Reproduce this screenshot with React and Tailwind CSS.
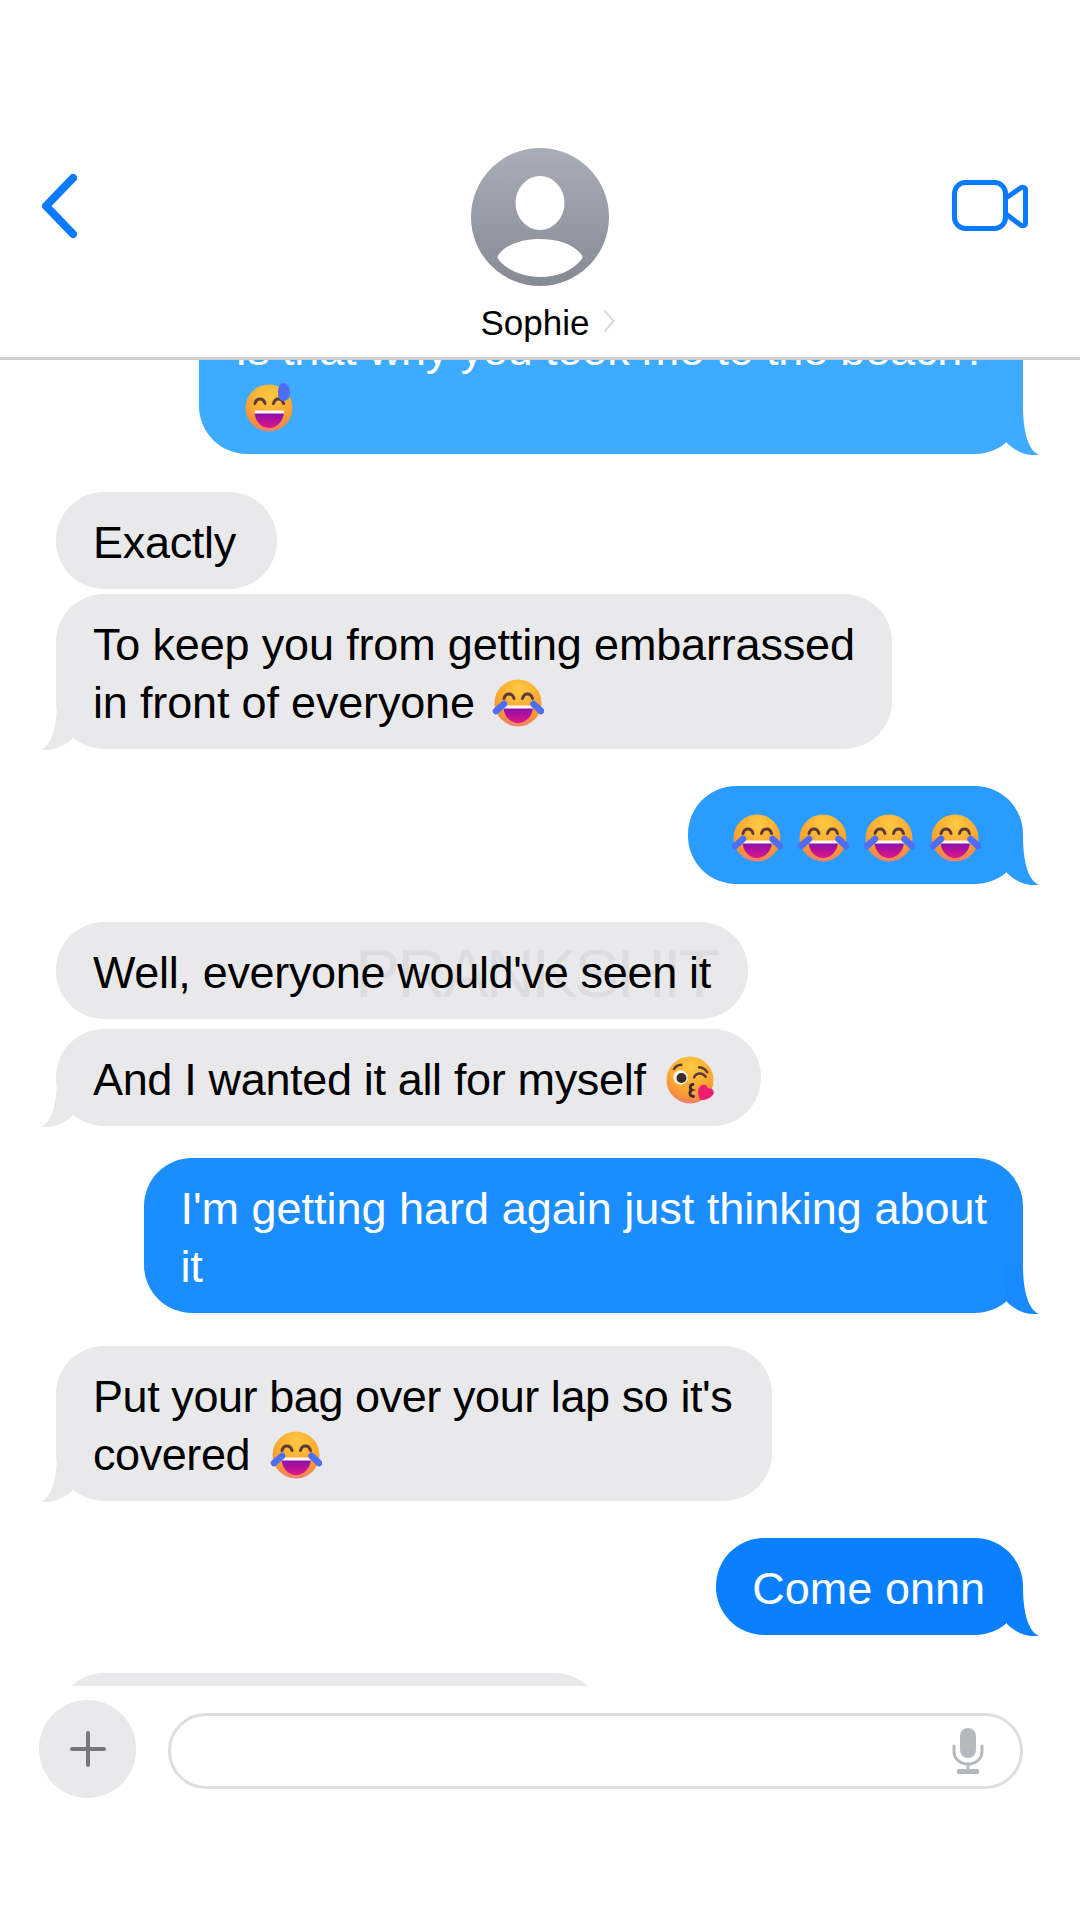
import { useId } from 'react'

const Face = ({ children }) => {
  const id = useId()
  return (
    <svg viewBox="0 0 52 52" className="inline-block h-[52px] w-[52px] align-[-11px]">
      <defs>
        <radialGradient id={id} cx="52%" cy="22%" r="82%">
          <stop offset="0%" stopColor="#fdca42" />
          <stop offset="60%" stopColor="#fba630" />
          <stop offset="84%" stopColor="#f68c42" />
          <stop offset="100%" stopColor="#ee7a90" />
        </radialGradient>
      </defs>
      <circle cx="26" cy="26" r="23.5" fill={`url(#${id})`} />
      {children}
    </svg>
  )
}

const Mouth = () => {
  const id = useId()
  return (
    <>
      <defs>
        <linearGradient id={id} x1="0" y1="0" x2="0" y2="1">
          <stop offset="0%" stopColor="#7d0fb0" />
          <stop offset="100%" stopColor="#e0168a" />
        </linearGradient>
      </defs>
      <path d="M11.5 29H41C41 39 34 46 26 46S11.5 39 11.5 29Z" fill={`url(#${id})`} />
      <rect x="11.500" y="28.500" width="29.500" height="3" fill="#fff6f6" />
    </>
  )
}

const HappyEyes = () => (
  <g fill="none" stroke="#5c3a38" strokeWidth="3" strokeLinecap="round">
    <path d="M12 21.5C13.500 15.500 20.500 15.500 22 21.5" />
    <path d="M30.500 21.500C32 15.500 39 15.500 40.500 21.500" />
  </g>
)

const JoyEmoji = () => (
  <Face>
    <HappyEyes />
    <Mouth />
    <g stroke="#4f6df5" strokeWidth="6.5" strokeLinecap="round">
      <line x1="4" y1="34" x2="12" y2="27" />
      <line x1="49" y1="34" x2="41.500" y2="27" />
    </g>
  </Face>
)

const SweatEmoji = () => (
  <Face>
    <HappyEyes />
    <Mouth />
    <path d="M40 1C45 1 47 6 47 11C47 16 44 19 40.5 19C37 19 35 16 35 11C35 6 36.5 1 40 1Z" fill="#4f6df5" />
  </Face>
)

const KissEmoji = () => (
  <Face>
    <g fill="none" stroke="#5c3a38" strokeWidth="2.4" strokeLinecap="round">
      <path d="M10 15C11.500 12.500 14.500 10.800 17.300 10.700" />
      <path d="M30 23.500C32 18.500 38.500 18 41.700 22.700" />
      <path d="M35 13.300C38.500 13.500 41.500 15.500 43.300 18.300" />
    </g>
    <path d="M29 30.500C25.500 30.500 25.500 35 28 36C25 37 25 42.500 29.500 42.500" fill="none" stroke="#3f2a30" strokeWidth="2.8" strokeLinecap="round" />
    <circle cx="16.500" cy="23.500" r="7.200" fill="#fbf3ee" />
    <circle cx="17.500" cy="24" r="5" fill="#3a2b2f" />
    <path d="M36 32.500C39 29 44 31 43.500 34.500C47 33 51 36.500 49.500 40C47.500 44 41 46.500 36.500 46C34 42 33 36 36 32.500Z" fill="#ea1f72" />
  </Face>
)

const Tail = ({ side, color }) => (
  <svg
    viewBox="0 0 36 49"
    className={
      side === 'right'
        ? 'absolute right-[-16px] bottom-[-1px] h-[49px] w-[36px]'
        : 'absolute bottom-[-1px] left-[-15px] h-[49px] w-[36px] -scale-x-100'
    }
  >
    <path d="M20 0C20 22 24 44 36 49C26 50 14 47 4 37L0 0Z" fill={color} />
  </svg>
)

const Sent = ({ children, color, bg, className = '' }) => (
  <div className={`relative mr-[57px] self-end rounded-[48px] px-[36px] pt-[21.5px] pb-[17.5px] text-white ${bg} ${className}`}>
    {children}
    <Tail side="right" color={color} />
  </div>
)

const Received = ({ children, tail, className = '' }) => (
  <div className={`relative ml-[56px] self-start rounded-[48px] bg-[#e9e9eb] pt-[21.5px] pb-[17.5px] pl-[37px] text-black ${className}`}>
    {children}
    {tail && <Tail side="left" color="#e9e9eb" />}
  </div>
)

export default function App() {
  return (
    <div className='relative flex h-[1920px] w-[1080px] flex-col bg-white font-["Liberation_Sans",sans-serif]'>
      {/* top bar */}
      <header className="relative z-10 grid h-[360px] shrink-0 grid-cols-[1fr_auto_1fr] items-start border-b-[3px] border-[#d2d2d2] bg-white pr-[50px] pl-[40px]">
        <svg viewBox="0 0 38 66" className="mt-[173px] h-[66px] w-[38px]">
          <path d="M33 5L6 33L33 61" fill="none" stroke="#0a7aff" strokeWidth="8" strokeLinecap="round" strokeLinejoin="round" />
        </svg>
        <div className="mt-[148px] ml-[10px] flex flex-col items-center">
          <svg viewBox="0 0 138 138" className="h-[138px] w-[138px]">
            <defs>
              <linearGradient id="avatar" x1="0" y1="0" x2="0" y2="1">
                <stop offset="0%" stopColor="#a8adb8" />
                <stop offset="100%" stopColor="#868a94" />
              </linearGradient>
            </defs>
            <circle cx="69" cy="69" r="69" fill="url(#avatar)" />
            <ellipse cx="69" cy="55" rx="24.500" ry="27" fill="#fff" />
            <path d="M28 106C36 96 52 91 69 91C86 91 102 96 110 106C112 108 112 110 110 112C101 123 86 129 69 129C52 129 37 123 28 112C26 110 26 108 28 106Z" fill="#fff" />
          </svg>
          <div className="relative mt-[17px] ml-[-10px] text-[35px] leading-[40px] text-black">
            Sophie
            <svg viewBox="0 0 12 24" className="absolute top-[6px] right-[-26px] h-[24px] w-[12px]">
              <path d="M1.500 1.500L10.500 12L1.500 22.500" fill="none" stroke="#dcdcdc" strokeWidth="2" />
            </svg>
          </div>
        </div>
        <svg viewBox="0 0 80 56" className="mt-[178px] h-[56px] w-[80px] justify-self-end">
          <rect x="4.500" y="4.500" width="51" height="46" rx="11" fill="none" stroke="#0a7aff" strokeWidth="5" />
          <path d="M56 20L70.500 10C73 8.500 75.500 9.500 75.500 12V45C75.500 47.500 73 48.500 70.500 47L56 36" fill="none" stroke="#0a7aff" strokeWidth="5" strokeLinejoin="round" />
        </svg>
      </header>

      {/* conversation, scrolled so the first bubble runs under the bar */}
      <main className="h-[1326px] shrink-0 overflow-hidden text-[45px] leading-[58px]">
        <div className="mt-[-61px] flex flex-col">
          <Sent color="#3fabff" bg="bg-[#3fabff]" className="tracking-[-0.16px]">
            Is that why you took me to the beach?
            <br />
            <span className="ml-[8px]">
              <SweatEmoji />
            </span>
          </Sent>
          <Received className="mt-[38px] pr-[41px] tracking-[-0.3px]">Exactly</Received>
          <Received tail className="mt-[5px] pr-[37px] tracking-[-0.17px]">
            To keep you from getting embarrassed
            <br />
            in front of everyone&nbsp;
            <span className="ml-[5px]">
              <JoyEmoji />
            </span>
          </Received>
          <Sent color="#2a9cff" bg="bg-[#2a9cff]" className="mt-[37px] !pt-[26px] !pr-[42px] !pb-[20px] !pl-[43px]">
            <div className="flex gap-[14px] leading-[52px]">
              <JoyEmoji />
              <JoyEmoji />
              <JoyEmoji />
              <JoyEmoji />
            </div>
          </Sent>
          <Received className="mt-[38px] pr-[37px] tracking-[-0.33px]">Well, everyone would've seen it</Received>
          <Received tail className="mt-[10px] pr-[45px] tracking-[-0.34px]">
            And I wanted it all for myself&nbsp;
            <span className="ml-[6px]">
              <KissEmoji />
            </span>
          </Received>
          <Sent color="#1a8bff" bg="bg-[#1c8dff]" className="mt-[32px]">
            I'm getting hard again just thinking about
            <br />
            it
          </Sent>
          <Received tail className="mt-[33px] pr-[40px] tracking-[-0.43px]">
            Put your bag over your lap so it's
            <br />
            covered&nbsp;
            <span className="ml-[8px]">
              <JoyEmoji />
            </span>
          </Received>
          <Sent color="#0a80ff" bg="bg-[#0a80ff]" className="mt-[37px] !pr-[38px]">
            Come onnn
          </Sent>
          <Received className="mt-[38px] h-[98px] w-[547px]" />
        </div>
      </main>

      {/* composer */}
      <footer className="mt-[14px] flex items-center gap-[32px] pr-[57px] pl-[39px]">
        <div className="flex h-[98px] w-[97px] shrink-0 items-center justify-center rounded-full bg-[#e9e9eb]">
          <svg viewBox="0 0 40 40" className="h-[40px] w-[40px]">
            <path d="M20 4V36M4 20H36" stroke="#77787c" strokeWidth="4" strokeLinecap="round" />
          </svg>
        </div>
        <div className="mt-[4px] flex h-[76px] flex-1 items-center justify-end rounded-full border-[3px] border-[#dedede] pr-[36px]">
          <svg viewBox="0 0 32 46" className="h-[46px] w-[32px]">
            <rect x="8" y="0" width="16" height="30" rx="8" fill="#b5b8bf" />
            <path d="M2 18V23C2 31 8 36 16 36C24 36 30 31 30 23V18" fill="none" stroke="#b5b8bf" strokeWidth="3" strokeLinecap="round" />
            <path d="M16 36V43" stroke="#b5b8bf" strokeWidth="3" />
            <rect x="5" y="41" width="22" height="5" rx="1.500" fill="#b5b8bf" />
          </svg>
        </div>
      </footer>

      {/* watermark */}
      <div className="pointer-events-none absolute top-[936px] left-[355px] text-[68px] leading-[74px] font-light tracking-[-3px] text-black/5">
        PRANKSHIT
      </div>
    </div>
  )
}
